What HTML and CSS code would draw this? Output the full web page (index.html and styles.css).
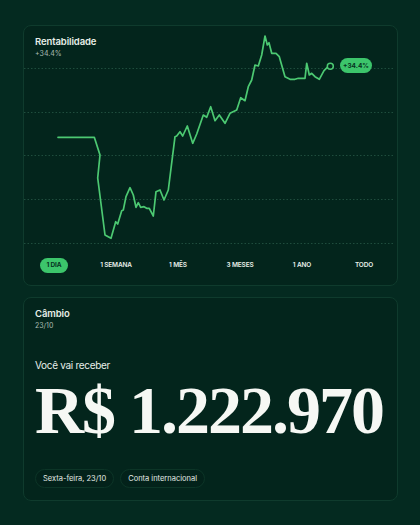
FILE: index.html
```html
<!DOCTYPE html>
<html lang="pt-BR">
<head>
    <meta charset="UTF-8">
    <meta name="viewport" content="width=device-width, initial-scale=1.0">
    <title>Rentabilidade e Câmbio</title>
    <link rel="stylesheet" href="styles.css">
</head>
<body>
    <div class="container">
        <section class="card card-chart">
            <div class="plot">
                <div class="card-head">
                    <h2>Rentabilidade</h2>
                    <span class="sub">+34.4%</span>
                </div>
                <svg class="chart" viewBox="24 26 373 224" width="373" height="224">
                    <g class="grid">
                        <line x1="24" y1="68.5" x2="395" y2="68.5"/>
                        <line x1="24" y1="112.5" x2="395" y2="112.5"/>
                        <line x1="24" y1="155.5" x2="395" y2="155.5"/>
                        <line x1="24" y1="199.5" x2="395" y2="199.5"/>
                        <line x1="24" y1="243.5" x2="395" y2="243.5"/>
                    </g>
                    <path class="line" d="M58,137.3 L94.3,137.3 L100,155 L97.7,178 L105,235 L111,238.3 L115.7,221.7 L117.7,224 L121.7,210.7 L123.3,210 L126,196.7 L130,187.7 L133.3,195 L136,207.3 L138.3,202.7 L140.7,207.3 L144,206.7 L146.7,208.3 L149.3,208.3 L153.3,216 L156,191.7 L160,190 L164,200 L168.3,190 L175,136.7 L176.7,136 L180,131.7 L182.7,136 L187.3,126 L192.7,143.3 L196.7,134 L203.3,115 L206.7,117.3 L210.7,106.7 L215,120.7 L219.3,115 L225,123.3 L230,113.3 L236.7,110 L240.7,97.7 L245,100.7 L248.3,86.7 L251.7,80 L255,65 L258.3,66 L261.7,55 L265,36 L267.3,45 L269,42.7 L271.7,53.3 L276,53.3 L279.3,56.7 L285,76.7 L290,79.3 L295,79.3 L298.3,78.3 L305,78.3 L306.7,63.3 L309.3,75 L311.7,73.3 L315,76.7 L319.3,79.3 L324,70.7 L327.3,67.3"/>
                    <circle class="dot" cx="330.3" cy="66.3" r="3"/>
                    <rect class="tag" x="340" y="58" width="32" height="15" rx="7.5"/>
                    <text class="tag-text" x="356" y="68.3" text-anchor="middle">+34.4%</text>
                </svg>
            </div>
            <div class="periods">
                <span class="period active">1 DIA</span>
                <span class="period">1 SEMANA</span>
                <span class="period">1 MÊS</span>
                <span class="period">3 MESES</span>
                <span class="period">1 ANO</span>
                <span class="period">TODO</span>
            </div>
        </section>

        <section class="card card-exchange">
            <div class="card-head">
                <h2>Câmbio</h2>
                <span class="sub">23/10</span>
            </div>
            <p class="receive-label">Você vai receber</p>
            <div class="amount">R$ 1.222.970</div>
            <div class="chips">
                <span class="chip">Sexta-feira, 23/10</span>
                <span class="chip">Conta internacional</span>
            </div>
        </section>
    </div>
</body>
</html>
```

FILE: styles.css
```css
:root {
    --bg: #042a20;
    --card-bg: #03251c;
    --border: #0f3b2d;
    --grid: #1f4d3d;
    --green: #3cc56b;
    --line: #4cc972;
    --text: #e8efe9;
    --text-muted: #a9bcb2;
    --dark-text: #06331f;
}

body {
    margin: 0;
    background-color: var(--bg);
    color: var(--text);
    font-family: Inter, "Noto Sans", sans-serif;
}

.container {
    padding: 25px 22px 0 23px;
}

.card {
    background-color: var(--card-bg);
    border: 1px solid var(--border);
    border-radius: 8px;
}

.card-head h2 {
    margin: 0;
    font-size: 9.5px;
    font-weight: 600;
    line-height: 12px;
    letter-spacing: -0.1px;
}

.card-head .sub {
    display: block;
    font-size: 7px;
    line-height: 11px;
    color: var(--text-muted);
}

/* chart card */
.card-chart {
    height: 259px;
}

.plot {
    display: grid;
}

.plot > * {
    grid-area: 1 / 1;
}

.plot .card-head {
    padding: 10px 0 0 11px;
    align-self: start;
}

.chart {
    display: block;
}

.grid line {
    stroke: var(--grid);
    stroke-width: 1;
    stroke-dasharray: 1.5 2;
}

.line {
    fill: none;
    stroke: var(--line);
    stroke-width: 1.7;
    stroke-linejoin: round;
    stroke-linecap: round;
}

.dot {
    fill: var(--card-bg);
    stroke: var(--line);
    stroke-width: 1.5;
}

.tag {
    fill: var(--green);
}

.tag-text {
    fill: var(--dark-text);
    font-family: Inter, sans-serif;
    font-size: 6.5px;
    font-weight: 700;
}

.periods {
    display: grid;
    grid-template-columns: repeat(6, 62px);
    margin: 8px 0 0 -1px;
    justify-items: center;
}

.period {
    font-size: 6.5px;
    font-weight: 600;
    line-height: 15px;
    height: 15px;
    letter-spacing: -0.15px;
}

.period.active {
    background-color: var(--green);
    color: var(--dark-text);
    border-radius: 8px;
    width: 28px;
    text-align: center;
    font-weight: 700;
}

/* exchange card */
.card-exchange {
    margin-top: 11px;
    height: 204px;
    padding: 10px 12px 0 11px;
    box-sizing: border-box;
}

.receive-label {
    margin: 28px 0 0;
    font-size: 10px;
    line-height: 13px;
    letter-spacing: -0.3px;
}

.amount {
    margin-top: 6px;
    font-family: "Liberation Serif", serif;
    font-weight: 700;
    font-size: 68px;
    line-height: 64px;
    letter-spacing: -2px;
    color: #f6f8f4;
}

.chips {
    display: flex;
    gap: 6px;
    margin-top: 27px;
}

.chip {
    font-size: 7.5px;
    line-height: 17px;
    padding: 0 7px;
    border: 1px solid #0c3527;
    background-color: #03221a;
    border-radius: 10px;
    color: #e3ebe6;
}
```
